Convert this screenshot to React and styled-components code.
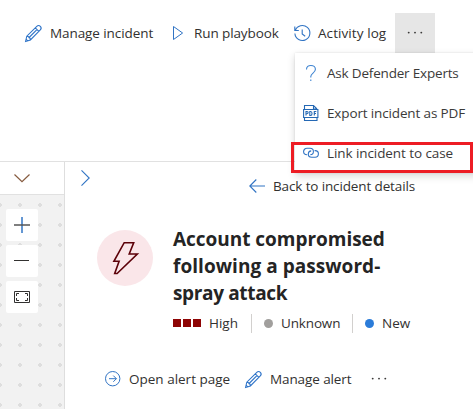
import React from "react";
import styled, { createGlobalStyle } from "styled-components";

const GlobalStyle = createGlobalStyle`
  * { box-sizing: border-box; }
  body {
    margin: 0;
    background: #fff;
    color: #323130;
    font-family: "Open Sans", "Noto Sans", sans-serif;
    font-size: 14px;
    overflow: hidden;
  }
  svg { display: block; flex: none; overflow: visible; }
`;

const Page = styled.div`
  position: relative;
  width: 473px;
  height: 409px;
  overflow: hidden;
  display: flex;
  flex-direction: column;
`;

const Toolbar = styled.header`
  display: flex;
  height: 161px;
  padding: 13px 0 0 25px;
  align-items: flex-start;
`;

const Command = styled.div`
  display: flex;
  align-items: center;
  gap: ${(p) => p.$gap || 8}px;
  width: ${(p) => p.$width}px;
  height: 40px;
  flex: none;
`;

const Label = styled.span`
  white-space: nowrap;
  line-height: 20px;
  font-size: 13.5px;
  letter-spacing: ${(p) => p.$track || 0}px;
`;

const MoreButton = styled.div`
  display: flex;
  align-items: center;
  justify-content: center;
  width: 40px;
  height: 40px;
  background: ${(p) => (p.$active ? "#e6e6e6" : "transparent")};
`;

const Menu = styled.div`
  position: absolute;
  left: 295px;
  top: 53px;
  width: 200px;
  height: 120px;
  background: #fff;
  box-shadow: 0 3px 8px rgba(0, 0, 0, 0.16), 0 0 2px rgba(0, 0, 0, 0.1);
`;

const MenuItem = styled.div`
  display: flex;
  align-items: center;
  gap: 8px;
  height: 40px;
  padding-left: 8px;
  color: #3b3a39;
`;

const Highlight = styled.div`
  position: absolute;
  left: 291px;
  top: 142px;
  width: 182px;
  height: 31px;
  border: 3px solid #ed1c24;
`;

const Workspace = styled.main`
  display: flex;
  flex: 1;
  border-top: 1px solid #e1e1e1;
`;

const Canvas = styled.aside`
  display: flex;
  flex-direction: column;
  width: 65px;
  border-right: 1px solid #dedede;
`;

const CanvasHeader = styled.div`
  height: 33px;
  padding: 12px 0 0 14px;
  border-bottom: 1px solid #e1e1e1;
`;

const DotGrid = styled.div`
  flex: 1;
  display: flex;
  flex-direction: column;
  gap: 4px;
  padding: 14px 0 0 6px;
  background: #f2f2f2 radial-gradient(circle at 10px 10px, #dedede 1.6px, transparent 2.1px) -10px 0 / 20px 20px;
`;

const ZoomButton = styled.div`
  display: flex;
  align-items: center;
  justify-content: center;
  width: 32px;
  height: 32px;
  border-radius: 2px;
  background: #fff;
`;

const Details = styled.section`
  flex: 1;
  display: flex;
  flex-direction: column;
`;

const NavRow = styled.div`
  display: flex;
  align-items: flex-start;
  height: 67px;
  padding: 8px 0 0 16px;
`;

const BackLink = styled.div`
  display: flex;
  align-items: center;
  gap: 8px;
  height: 32px;
  margin-left: 159px;
`;

const Summary = styled.div`
  display: flex;
  gap: 20px;
  height: 135px;
  padding-left: 32px;
`;

const AlertBadge = styled.div`
  width: 56px;
  height: 56px;
  margin-top: 1px;
  border-radius: 50%;
  background: #fae6e9;
`;

const TitleBlock = styled.div`
  margin-top: -3px;
`;

const Title = styled.h1`
  margin: 0;
  color: #242424;
  font-size: 19px;
  font-weight: 700;
  line-height: 27px;
  white-space: nowrap;
`;

const TitleLine = styled.span`
  display: block;
  letter-spacing: ${(p) => p.$track || 0}px;
`;

const StatusRow = styled.div`
  display: flex;
  align-items: center;
  height: 20px;
  margin-top: 6px;
`;

const Status = styled.div`
  display: flex;
  align-items: center;
  gap: 8px;
  width: ${(p) => p.$width}px;
  height: 19px;
  padding-left: ${(p) => (p.$divided ? 12 : 0)}px;
  border-left: ${(p) => (p.$divided ? "1px solid #d2d0ce" : "none")};
`;

const Severity = styled.span`
  display: flex;
  gap: 2px;
`;

const Block = styled.i`
  width: 8px;
  height: 8px;
  background: #8e0505;
`;

const Dot = styled.i`
  width: 9px;
  height: 9px;
  border-radius: 50%;
  background: ${(p) => p.$color};
`;

const Actions = styled.div`
  display: flex;
  align-items: center;
  height: 30px;
  padding-left: 40px;
`;

const Pencil = () => (
  <svg width="17" height="17" viewBox="0 0 17 17" fill="none" stroke="#2f74c8" strokeWidth="1.1">
    <path d="M.6 16.400l1.200-5.200L11.800 1.300c1-1 2.500-1 3.500 0s1 2.500 0 3.500L5.400 14.900zM1.800 11.200c2 0 3.600 1.700 3.600 3.700M10.300 2.800l3.500 3.500M3.600 13l8.300-8.300M1.100 14.200l1.600 1.600" />
  </svg>
);

const Play = () => (
  <svg width="16" height="16" viewBox="0 0 16 16" fill="none" stroke="#3174c4">
    <path d="M1.500 1.500v13L10.600 8z" />
  </svg>
);

const History = () => (
  <svg width="17" height="17" viewBox="0 0 17 17" fill="none" stroke="#3174c4" strokeWidth="1.100">
    <path d="M1.300 5.500A7.500 7.500 0 1 1 .9 8.500M.8 1.500v4h4M8.200 4.500v4.500l3 2.300" />
  </svg>
);

const Dots = () => (
  <svg width="16" height="4" viewBox="0 0 16 4" fill="#3b3a39">
    <circle cx="1.700" cy="1.600" r=".95" />
    <circle cx="8" cy="1.600" r=".95" />
    <circle cx="14.300" cy="1.600" r=".95" />
  </svg>
);

const Question = () => (
  <svg width="16" height="16" viewBox="0 0 16 16" fill="none" stroke="#3d83d1" strokeWidth="1.100">
    <path d="M3.500 4.500C3.500 1.800 5.300.5 7.900.5s4.500 1.500 4.500 3.800c0 3.700-4.600 3.800-4.600 7.200v1M7.800 14.500V16" />
  </svg>
);

const PdfFile = () => (
  <svg width="16" height="16" viewBox="0 0 16 16" fill="none" stroke="#2468b4" strokeWidth="1.100">
    <path d="M1.500 4V.5h9L14 4M10.500.5V4H14M.6 4.500h14.300v8H.6zM1.500 12.500v3H14v-3M3 10.500v-4h1c1.500 0 1.500 2.200 0 2.200H3M6.800 6.500v4h.8c1.900 0 1.900-4 0-4zM11.300 10.500v-4h2M11.300 8.500H13" />
  </svg>
);

const LinkIcon = () => (
  <svg width="16" height="16" viewBox="0 0 16 16" fill="none" stroke="#3174c4" strokeWidth="1.100">
    <path d="M4.200 9.800H4C2 9.800.6 8.500.6 6.600S2 3.300 4 3.300h3c2 0 3.400 1.300 3.400 3.100 0 1.800-1.200 3.200-3 3.200M11.600 5.600h.5c1.900 0 3.300 1.300 3.300 3.200s-1.400 3.500-3.300 3.500H8.700c-2 0-3.400-1.400-3.400-3.300 0-1.700 1.200-3 2.900-3.100" />
  </svg>
);

const ChevronDown = () => (
  <svg width="16" height="8" viewBox="0 0 16 8" fill="none" stroke="#865b3f" strokeWidth="1.200">
    <path d="M.5.5L8 7.700 15.500.5" />
  </svg>
);

const ChevronRight = () => (
  <svg width="9" height="16" viewBox="0 0 9 16" fill="none" stroke="#3174c4" strokeWidth="1.100">
    <path d="M.5.3L8.200 8 .5 15.700" />
  </svg>
);

const ArrowLeft = () => (
  <svg width="16" height="14" viewBox="0 0 16 14" fill="none" stroke="#3174c4" strokeWidth="1.100">
    <path d="M16 7H1M7.300.5L.8 7l6.500 6.500" />
  </svg>
);

const Plus = () => (
  <svg width="16" height="16" viewBox="0 0 16 16" fill="none" strokeWidth="1.500">
    <path d="M8 0v16" stroke="#3174c4" />
    <path d="M0 8h16" stroke="#555" />
  </svg>
);

const Minus = () => (
  <svg width="16" height="16" viewBox="0 0 16 16" fill="none" stroke="#323130">
    <path d="M0 7.500h15" />
  </svg>
);

const FitScreen = () => (
  <svg width="16" height="12" viewBox="0 0 16 12" fill="none" stroke="#323130">
    <path d="M.5.5h15v11H.5zM2.500 5V2.500H5M11 2.500h2.500V5M13.500 7v2.500H11M5 9.500H2.500V7" />
  </svg>
);

const Bolt = () => (
  <svg width="56" height="56" viewBox="0 0 56 56" fill="none" stroke="#5c0008" strokeWidth="1.600">
    <path d="M27.200 12.700h9.500l-4.500 11.300h8.100L20.100 43.500h-2.400l4.400-12.200h-5.200z" />
  </svg>
);

const OpenArrow = () => (
  <svg width="16" height="16" viewBox="0 0 16 16" fill="none" stroke="#3174c4">
    <circle cx="7.700" cy="7.700" r="7.200" />
    <path d="M4 7.700h7.400M8.300 4.600l3.100 3.100-3.100 3.100" />
  </svg>
);

export default function App() {
  return (
    <Page>
      <GlobalStyle />
      <Toolbar>
        <Command $width={147}><Pencil /><Label $track={-0.08}>Manage incident</Label></Command>
        <Command $width={122} $gap={6}><Play /><Label $track={-0.1}>Run playbook</Label></Command>
        <Command $width={101} $gap={7}><History /><Label $track={0.08}>Activity log</Label></Command>
        <MoreButton $active><Dots /></MoreButton>
      </Toolbar>
      <Workspace>
        <Canvas>
          <CanvasHeader><ChevronDown /></CanvasHeader>
          <DotGrid>
            <ZoomButton><Plus /></ZoomButton>
            <ZoomButton><Minus /></ZoomButton>
            <ZoomButton><FitScreen /></ZoomButton>
          </DotGrid>
        </Canvas>
        <Details>
          <NavRow>
            <ChevronRight />
            <BackLink><ArrowLeft /><Label $track={-0.13}>Back to incident details</Label></BackLink>
          </NavRow>
          <Summary>
            <AlertBadge><Bolt /></AlertBadge>
            <TitleBlock>
              <Title>
                <TitleLine $track={-0.03}>Account compromised</TitleLine>
                <TitleLine $track={0.05}>following a password-</TitleLine>
                <TitleLine $track={-0.35}>spray attack</TitleLine>
              </Title>
              <StatusRow>
                <Status $width={78}>
                  <Severity><Block /><Block /><Block /></Severity>
                  <Label>High</Label>
                </Status>
                <Status $width={101} $divided><Dot $color="#a19f9d" /><Label $track={-0.15}>Unknown</Label></Status>
                <Status $width={80} $divided><Dot $color="#2b7cd9" /><Label>New</Label></Status>
              </StatusRow>
            </TitleBlock>
          </Summary>
          <Actions>
            <Command $width={140}><OpenArrow /><Label>Open alert page</Label></Command>
            <Command $width={114}><Pencil /><Label $track={-0.1}>Manage alert</Label></Command>
            <MoreButton><Dots /></MoreButton>
          </Actions>
        </Details>
      </Workspace>
      <Menu>
        <MenuItem><Question /><Label $track={-0.19}>Ask Defender Experts</Label></MenuItem>
        <MenuItem><PdfFile /><Label $track={-0.14}>Export incident as PDF</Label></MenuItem>
        <MenuItem><LinkIcon /><Label $track={-0.08}>Link incident to case</Label></MenuItem>
      </Menu>
      <Highlight />
    </Page>
  );
}
